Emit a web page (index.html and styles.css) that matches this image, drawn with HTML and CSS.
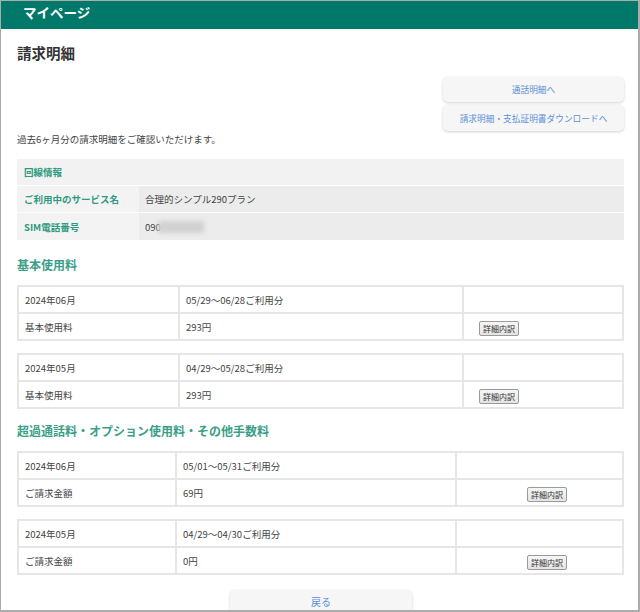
FILE: index.html
```html
<!DOCTYPE html>
<html lang="ja">
<head>
<meta charset="utf-8">
<title>請求明細</title>
<link rel="stylesheet" href="styles.css">
</head>
<body>
<div class="frame">
  <header class="topbar">マイページ</header>
  <main class="content">
    <h1 class="page-title">請求明細</h1>
    <div class="links">
      <a class="link-btn">通話明細へ</a>
      <a class="link-btn link-btn-2">請求明細・支払証明書ダウンロードへ</a>
    </div>
    <p class="desc">過去6ヶ月分の請求明細をご確認いただけます。</p>

    <div class="info">
      <div class="info-head">回線情報</div>
      <div class="info-row">
        <div class="info-label">ご利用中のサービス名</div>
        <div class="info-value">合理的シンプル290プラン</div>
      </div>
      <div class="info-row">
        <div class="info-label">SIM電話番号</div>
        <div class="info-value">090<span class="masked"></span></div>
      </div>
    </div>

    <h2 class="section-title">基本使用料</h2>
    <table class="bill bill-a">
      <tr><td class="c1">2024年06月</td><td class="c2">05/29～06/28ご利用分</td><td class="c3"></td></tr>
      <tr><td class="c1">基本使用料</td><td class="c2">293円</td><td class="c3"><button class="detail">詳細内訳</button></td></tr>
    </table>
    <table class="bill bill-a">
      <tr><td class="c1">2024年05月</td><td class="c2">04/29～05/28ご利用分</td><td class="c3"></td></tr>
      <tr><td class="c1">基本使用料</td><td class="c2">293円</td><td class="c3"><button class="detail">詳細内訳</button></td></tr>
    </table>

    <h2 class="section-title section-title-2">超過通話料・オプション使用料・その他手数料</h2>
    <table class="bill bill-b">
      <tr><td class="c1">2024年06月</td><td class="c2">05/01～05/31ご利用分</td><td class="c3"></td></tr>
      <tr><td class="c1">ご請求金額</td><td class="c2">69円</td><td class="c3"><button class="detail">詳細内訳</button></td></tr>
    </table>
    <table class="bill bill-b">
      <tr><td class="c1">2024年05月</td><td class="c2">04/29～04/30ご利用分</td><td class="c3"></td></tr>
      <tr><td class="c1">ご請求金額</td><td class="c2">0円</td><td class="c3"><button class="detail">詳細内訳</button></td></tr>
    </table>

    <div class="back-wrap"><a class="back-btn">戻る</a></div>
  </main>
</div>
</body>
</html>
```

FILE: styles.css
```css
html, body {
  margin: 0;
  padding: 0;
  background: #fff;
}
body {
  font-family: "Noto Sans CJK JP", "Noto Sans", sans-serif;
  color: #444;
}
.frame {
  width: 640px;
  height: 612px;
  box-sizing: border-box;
  border: 1px solid #acacac;
  border-right-width: 2px;
  border-bottom-width: 2px;
  overflow: hidden;
  background: #fff;
}
.topbar {
  height: 28px;
  box-sizing: border-box;
  background: #00786a;
  color: #fff;
  font-weight: bold;
  font-size: 13.5px;
  line-height: 20px;
  padding: 1px 0 0 22px;
}
.content {
  padding: 0 14px 0 16px;
}
.page-title {
  margin: 14px 0 0;
  font-size: 14.5px;
  line-height: 20px;
  font-weight: bold;
  color: #333;
}
.links {
  margin-top: 14px;
  display: flex;
  flex-direction: column;
  align-items: flex-end;
  gap: 3px;
}
.link-btn {
  display: flex;
  align-items: center;
  justify-content: center;
  width: 181px;
  height: 25px;
  box-sizing: border-box;
  background: #f6f6f6;
  border-radius: 5px;
  box-shadow: 0 1px 3px rgba(0,0,0,0.18);
  color: #5b90d8;
  font-size: 8.7px;
}
.link-btn-2 {
  height: 26px;
}
.desc {
  margin: 0;
  font-size: 9.5px;
  line-height: 16px;
  color: #444;
}
.info {
  margin-top: 12px;
  background: #f2f2f2;
}
.info-head {
  height: 26px;
  line-height: 26px;
  padding-left: 7px;
  font-size: 9.5px;
  font-weight: bold;
  color: #2e9a80;
  border-bottom: 1px solid #fff;
}
.info-row {
  display: flex;
  height: 26px;
  border-bottom: 1px solid #fbfbfb;
}
.info-row:last-child {
  border-bottom: 0;
  height: 27px;
}
.info-label {
  width: 122px;
  padding-left: 7px;
  box-sizing: border-box;
  display: flex;
  align-items: center;
  font-size: 9.5px;
  font-weight: bold;
  color: #2e9a80;
  background: #f3f3f3;
}
.info-value {
  flex: 1;
  padding-left: 6px;
  display: flex;
  align-items: center;
  font-size: 9.5px;
  color: #444;
  background: #ececec;
}
.masked {
  display: inline-block;
  width: 46px;
  height: 12px;
  margin-left: -3px;
  background: #d2d2d2;
  filter: blur(2px);
}
.section-title {
  margin: 15px 0 0;
  font-size: 12px;
  line-height: 20px;
  font-weight: bold;
  color: #3a9f86;
}
.section-title-2 {
  margin-top: 12px;
}
.bill {
  width: 607px;
  margin-top: 10px;
  border-collapse: collapse;
  table-layout: fixed;
  font-size: 9.5px;
  color: #444;
}
.section-title-2 + .bill {
  margin-top: 10px;
}
.bill + .bill {
  margin-top: 12px;
}
.bill td {
  border: 2px solid #e6e6e6;
  height: 25px;
  padding: 0 0 0 6px;
  box-sizing: content-box;
  vertical-align: middle;
}
.bill-a .c1 { width: 153px; }
.bill-a .c2 { width: 276px; }
.bill-a .c3 { padding-left: 15px; }
.bill-b .c1 { width: 150px; }
.bill-b .c2 { width: 272px; }
.bill-b .c3 { padding-left: 70px; }
.detail {
  font-family: "Noto Sans CJK JP", sans-serif;
  font-size: 8px;
  line-height: 11px;
  padding: 1px 3px;
  margin: 3px 0 0;
  color: #333;
  background: linear-gradient(#f6f6f6, #e4e4e4);
  border: 1px solid #9a9a9a;
  border-radius: 2px;
}
.back-wrap {
  margin-top: 15px;
  padding-left: 213px;
}
.back-btn {
  display: flex;
  justify-content: center;
  padding-top: 5px;
  width: 182px;
  height: 30px;
  box-sizing: border-box;
  background: #f6f6f6;
  border-radius: 5px;
  box-shadow: 0 1px 3px rgba(0,0,0,0.18);
  color: #5b90d8;
  font-size: 10px;
  line-height: 14px;
}
```
